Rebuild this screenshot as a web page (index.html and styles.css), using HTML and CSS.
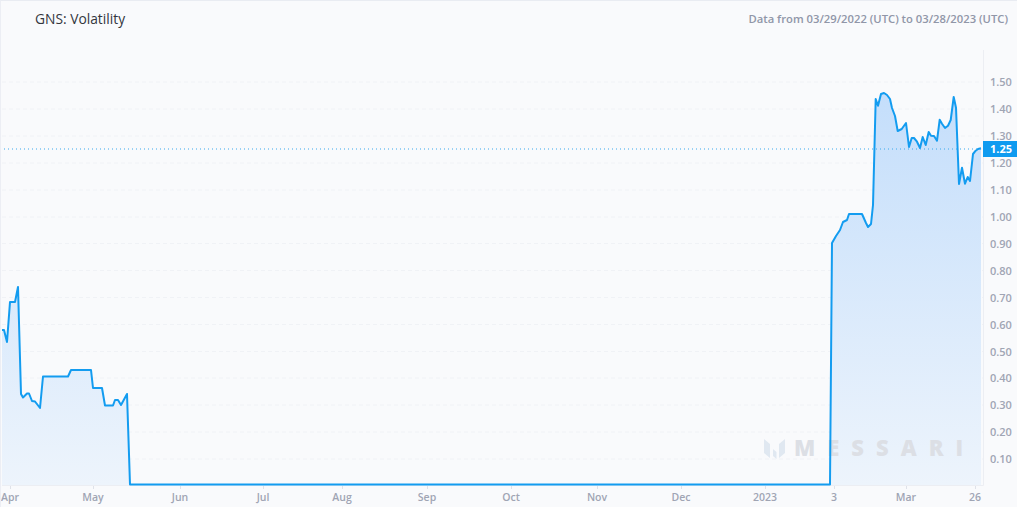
FILE: index.html
```html
<!DOCTYPE html>
<html lang="en">
<head>
<meta charset="utf-8">
<title>GNS: Volatility</title>
<link rel="stylesheet" href="styles.css">
</head>
<body>
<main class="page">
  <header class="head">
    <h1 class="title">GNS: Volatility</h1>
    <p class="range">Data from 03/29/2022 (UTC) to 03/28/2023 (UTC)</p>
  </header>
  <svg class="chart" viewBox="0 50 1017 457" width="1017" height="457" role="img" aria-label="GNS volatility chart">
    <defs>
      <linearGradient id="fill" gradientUnits="userSpaceOnUse" x1="0" y1="90" x2="0" y2="485">
        <stop offset="0" stop-color="#c4defb"/>
        <stop offset="1" stop-color="#edf4fc"/>
      </linearGradient>
    </defs>
    <g class="grid">
      <line x1="2" x2="983" y1="82" y2="82"/><line x1="2" x2="983" y1="109" y2="109"/>
      <line x1="2" x2="983" y1="136" y2="136"/><line x1="2" x2="983" y1="163" y2="163"/>
      <line x1="2" x2="983" y1="190" y2="190"/><line x1="2" x2="983" y1="217" y2="217"/>
      <line x1="2" x2="983" y1="243.5" y2="243.5"/><line x1="2" x2="983" y1="270.5" y2="270.5"/>
      <line x1="2" x2="983" y1="297.5" y2="297.5"/><line x1="2" x2="983" y1="324.5" y2="324.5"/>
      <line x1="2" x2="983" y1="351.5" y2="351.5"/><line x1="2" x2="983" y1="378" y2="378"/>
      <line x1="2" x2="983" y1="405" y2="405"/><line x1="2" x2="983" y1="432" y2="432"/>
      <line x1="2" x2="983" y1="459" y2="459"/>
    </g>
    <path class="axis" d="M983.5 50V485.5H2"/>
    <g class="ticks">
      <path d="M10.5 486v3M93.5 486v3M180.5 486v3M263.5 486v3M342.5 486v3M427.5 486v3M511.5 486v3M597.5 486v3M681.5 486v3M765.5 486v3M834.5 486v3M906.5 486v3M975.5 486v3"/>
    </g>
    <path class="area" d="M2 330L4 330L7 342L10 302L15 302L18 287L21 394L23 397.5L27 393.5L29 393.5L32 401L35 401.5L40 408L43 376.5L68 376.5L71 370L91 370L93 388L102 388L105 405.5L113 405.5L115 400L118 400L121 405L127 394L130 484.5L830 484.5L832 243L836 236L840 230L843 222L847 220L849 214L862 214L866 223L868 227L871 224L873 205L875.7 99L878 105.7L881 94L884 93L887 95L890 99L892 108L895 116L897.7 131L901.7 129L906 123L909 147L911.7 138L914 138L917 141.7L920 148L922.7 137L925.7 145L928.7 132L931 135.7L934 136L937 140.7L939.7 119.7L942 123.7L945 128L948 125.7L950.7 120L953.7 97L956 107.7L959 184L962 167.7L965 183.7L967.7 177L970 181L973 154L975.7 150.7L978 149L981 148.3V485H2Z"/>
    <g class="mark" aria-hidden="true">
      <path d="M764 439l6 5v14l-6-5zM773 449l3.500 3v7l-3.500-3zM779 444l6-5v14l-6 5z"/>
    </g>
    <text class="brand" x="794" y="456">MESSARI</text>
    <path class="line" d="M2 330L4 330L7 342L10 302L15 302L18 287L21 394L23 397.5L27 393.5L29 393.5L32 401L35 401.5L40 408L43 376.5L68 376.5L71 370L91 370L93 388L102 388L105 405.5L113 405.5L115 400L118 400L121 405L127 394L130 484.5L830 484.5L832 243L836 236L840 230L843 222L847 220L849 214L862 214L866 223L868 227L871 224L873 205L875.7 99L878 105.7L881 94L884 93L887 95L890 99L892 108L895 116L897.7 131L901.7 129L906 123L909 147L911.7 138L914 138L917 141.7L920 148L922.7 137L925.7 145L928.7 132L931 135.7L934 136L937 140.7L939.7 119.7L942 123.7L945 128L948 125.7L950.7 120L953.7 97L956 107.7L959 184L962 167.7L965 183.7L967.7 177L970 181L973 154L975.7 150.7L978 149L981 148.3"/>
    <line class="last" x1="0" x2="983" y1="149" y2="149"/>
    <g class="labels">
      <text x="990" y="86">1.50</text><text x="990" y="113">1.40</text><text x="990" y="140">1.30</text>
      <text x="990" y="167">1.20</text><text x="990" y="194">1.10</text><text x="990" y="221">1.00</text>
      <text x="990" y="247.500">0.90</text><text x="990" y="274.500">0.80</text><text x="990" y="301.500">0.70</text>
      <text x="990" y="328.500">0.60</text><text x="990" y="355.500">0.50</text><text x="990" y="382">0.40</text>
      <text x="990" y="409">0.30</text><text x="990" y="436">0.20</text><text x="990" y="463">0.10</text>
    </g>
    <rect class="tag" x="983" y="141" width="34" height="16"/>
    <text class="tagtext" x="990" y="153">1.25</text>
    <g class="labels mid">
      <text x="10" y="501">Apr</text><text x="93" y="501">May</text><text x="180" y="501">Jun</text>
      <text x="263" y="501">Jul</text><text x="342" y="501">Aug</text><text x="427" y="501">Sep</text>
      <text x="511" y="501">Oct</text><text x="597" y="501">Nov</text><text x="681" y="501">Dec</text>
      <text x="765" y="501">2023</text><text x="834" y="501">3</text><text x="906" y="501">Mar</text>
      <text x="975" y="501">26</text>
    </g>
  </svg>
</main>
</body>
</html>
```
FILE: styles.css
```css
* { box-sizing: border-box; }
html, body { margin: 0; padding: 0; }
body { background: #f9fafc; overflow: hidden; }
.page {
  width: 1017px;
  height: 507px;
  background: #f9fafc;
  border-top: 1px solid #e9ecf2;
  border-left: 1px solid #eceef4;
  display: flex;
  flex-direction: column;
  overflow: hidden;
}
.head {
  height: 49px;
  flex: none;
  display: flex;
  justify-content: space-between;
  align-items: flex-start;
  padding: 9px 9px 0 34px;
}
.title {
  margin: 0;
  font: 400 13.8px/18px "Open Sans", "Noto Sans", sans-serif;
  color: #33363d;
}
.range {
  margin: 0;
  font: 600 11.25px/18px "Open Sans", "Noto Sans", sans-serif;
  color: #9096a8;
}
.chart { display: block; flex: none; margin-left: -1px; }
.grid line { stroke: #f0f2f6; stroke-width: 1; stroke-dasharray: 4 3; }
.axis { fill: none; stroke: #eceef3; stroke-width: 1; }
.ticks path { fill: none; stroke: #dfe2e9; stroke-width: 1; }
.area { fill: url(#fill); }
.line { fill: none; stroke: #139cf0; stroke-width: 2; stroke-linejoin: round; }
.last { stroke: #39a8ee; stroke-width: 1; stroke-dasharray: 1 3; }
.labels text { font: 600 11px "Open Sans", "Noto Sans", sans-serif; fill: #a0a5b4; }
.labels.mid text { font-size: 10.5px; text-anchor: middle; }
.tag { fill: #0f9bf0; }
.tagtext { font: 700 11px "Open Sans", "Noto Sans", sans-serif; fill: #ffffff; }
.brand {
  font: 800 22px "Open Sans", "Noto Sans", sans-serif;
  letter-spacing: 12px;
  fill: #dcdfe5;
}
.mark path { fill: #e0e8f1; }
```
